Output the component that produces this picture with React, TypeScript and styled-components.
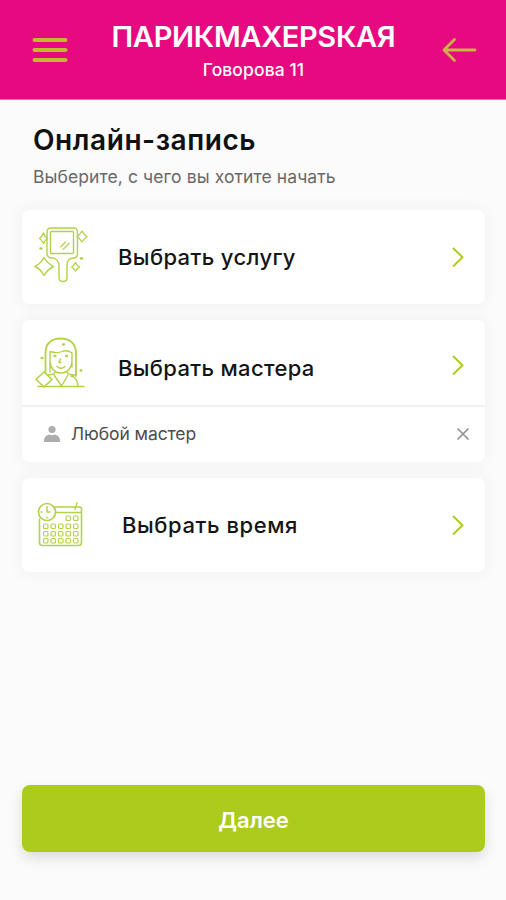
import React from 'react';
import styled, { createGlobalStyle } from 'styled-components';

const LIME = '#adcb1d';

const GlobalStyle = createGlobalStyle`
  * { box-sizing: border-box; }
  body { margin: 0; background: #fbfbfb; font-family: Inter, "Open Sans", sans-serif; }
  button { font-family: inherit; border: 0; padding: 0; background: none; cursor: pointer; }
  svg { display: block; flex: none; }
`;

const Screen = styled.div`
  display: flex;
  flex-direction: column;
  height: 900px;
  overflow: hidden;
`;

const Header = styled.header`
  display: flex;
  justify-content: space-between;
  height: 100px;
  padding: 0 29px 0 32px;
  background: #e6097f;
  border-bottom: 1px solid #ee6eb0;
`;

const HeaderButton = styled.button`
  display: flex;
  height: 100px;
  align-items: center;
`;

const Brand = styled.div`
  display: flex;
  flex-direction: column;
  align-items: center;
  padding: 19px 2px 0 0;
  color: #fff;
  white-space: nowrap;
`;

const BrandName = styled.div`
  font-size: 29px;
  font-weight: 600;
  line-height: 36px;
  letter-spacing: -0.3px;
`;

const Address = styled.div`
  margin-top: 4px;
  font-size: 17.5px;
  font-weight: 500;
  line-height: 22px;
  letter-spacing: 0.1px;
`;

const Main = styled.main`
  display: flex;
  flex: 1;
  flex-direction: column;
  padding: 22px 21px 48px 22px;
`;

const Intro = styled.div`
  height: 88px;
  padding-left: 11px;
  white-space: nowrap;
`;

const Heading = styled.h1`
  margin: 0;
  font-size: 28px;
  font-weight: 600;
  line-height: 36px;
  letter-spacing: 0.57px;
  color: #111;
`;

const Hint = styled.p`
  margin: 8px 0 0;
  font-size: 17.5px;
  line-height: 22px;
  letter-spacing: 0.1px;
  color: #686868;
`;

const Cards = styled.div`
  display: flex;
  flex-direction: column;
  gap: 16px;
`;

const Card = styled.section`
  border-radius: 7px;
  background: #fff;
  box-shadow: 0 0 16px 3px rgba(0, 0, 0, 0.035);
`;

const CardRow = styled.button<{ $height: number; $indent: number; $drop?: number }>`
  display: flex;
  align-items: center;
  width: 100%;
  height: ${({ $height }) => $height}px;
  padding: ${({ $drop = 0 }) => $drop}px 20px 0 10px;
  & > span { margin-left: ${({ $indent }) => $indent}px; }
`;

const RowTitle = styled.span<{ $track: number; $drop: number }>`
  flex: 1;
  padding-top: ${({ $drop }) => $drop}px;
  text-align: left;
  font-size: 22px;
  font-weight: 500;
  line-height: 28px;
  letter-spacing: ${({ $track }) => $track}px;
  color: #151515;
  white-space: nowrap;
`;

const Selected = styled.div`
  display: flex;
  align-items: center;
  height: 57px;
  padding: 0 15px 2px 21px;
  border-top: 2px solid #f0f0f0;
`;

const SelectedName = styled.span`
  flex: 1;
  margin-left: 10px;
  font-size: 17.5px;
  line-height: 24px;
  letter-spacing: -0.08px;
  color: #4c4c4c;
`;

const ClearButton = styled.button`
  display: flex;
`;

const NextButton = styled.button`
  height: 67px;
  margin-top: auto;
  border-radius: 8px;
  background: ${LIME};
  box-shadow: 0 6px 14px rgba(0, 0, 0, 0.13);
  color: #fff;
  font-size: 22px;
  font-weight: 600;
  padding-top: 3px;
`;

const LineIcon = styled.svg<{ $shift?: number }>`
  margin-top: ${({ $shift = 0 }) => $shift}px;
  fill: none;
  stroke: #b2d24a;
  stroke-width: 1.4;
  stroke-linejoin: round;
  stroke-linecap: round;
`;

const MenuIcon = () => (
  <svg width="36" height="36" fill="none" stroke="#c4b832" strokeWidth="4" strokeLinecap="round">
    <path d="M2.500 8H33.500M2.500 18H33.500M2.500 28H33.500" />
  </svg>
);

const BackIcon = () => (
  <svg width="36" height="28" fill="none" stroke="#cfb14a" strokeWidth="2.8" strokeLinecap="round" strokeLinejoin="round">
    <path d="M13.500 3.500 3 14 13.500 24.500M3.500 14H34" />
  </svg>
);

const Chevron = () => (
  <svg width="14" height="22" fill="none" stroke={LIME} strokeWidth="1.9">
    <path d="M2 2 11.500 11.200 2 20.500" />
  </svg>
);

const MirrorIcon = () => (
  <LineIcon width="60" height="60" viewBox="0 0 60 60">
    <rect x="18.500" y="4.500" width="23" height="22" rx="1" />
    <path d="M19 1h22.500q4 0 4 4v21.500q0 4.500-4 4.500c-5 0-6.500 3-6.500 8v11.500q0 4-4 4t-4-4V39c0-5-3-8-7-8q-5 0-5-4.500V5q0-4 4-4z" />
    <path d="m28.500 20 5-5m-2.500 7.500 6-6" strokeWidth="1.1" />
    <path d="M11.500 6q1.500 3.500 4 5.500-2.500 1.500-4 5-1.500-3.500-4-5Q10 9.500 11.500 6zM50 4q2 3.500 5 5.500-3 2-5 5.500-2-3.500-5-5.500Q48 7.500 50 4zM43.500 35.500q1.500 3 4 4.500-2.500 1.500-4 4-1.500-2.500-4-4 2.500-1.500 4-4.500z" />
    <path d="M12 30.500q3.500 6 9.500 9-6 3-9.500 9-3-6-9-9 6-3 9-9z" />
    <path d="M8.500 21.500h1M49 31.500h1" strokeWidth="2.500" />
  </LineIcon>
);

const StylistIcon = () => (
  <LineIcon $shift={4} width="60" height="60" viewBox="0 0 60 60">
    <path d="M13.500 39V16C13.500 6 20 1.500 28.500 1.500S44 6 44 16v23" strokeWidth="1.800" />
    <path d="M18 35V14.500q8 2.500 13-.5 5-1 9 2v14M18 24c0 6 4 12 11 12s11-6 11-12" />
    <path d="M15 38q7 0 8-3m12 0q1 3 8 3M22 38l7.500 11L36 38m3 1q6 1 7 9.500M25 29.500q4 3.500 8 0M28.500 22l-1.500 3.500h2" />
    <path d="M22.500 19h1M34 19h1M31 7.500h1M9.500 21h1M48.500 33.500h1" strokeWidth="2.300" />
    <path d="m12 35 8 7.500-8 7.500-8-7.500z" fill="#fff" strokeWidth="1.700" />
    <path d="M6 49.500H52" strokeWidth="1.600" />
  </LineIcon>
);

const CalendarIcon = () => (
  <LineIcon $shift={7} width="60" height="60" viewBox="0.5 0 60 60">
    <path d="M22 8h26q2 0 2 2v33.500q0 3-3 3H11q-3 0-3-3V20" strokeWidth="1.600" />
    <path d="M24 13.500h25M43.500 10.500l2-6.500" />
    <circle cx="15.500" cy="13" r="8.500" strokeWidth="1.700" />
    <path d="M15.500 7.500V13h3m-9 0h1m5 5v1" />
    {[17, 25, 32.500, 39.500].map((y, row) =>
      [12, 19.500, 27, 34.500, 42].slice(row === 0 ? 3 : 0).map((x) => (
        <rect key={`${x}-${y}`} x={x} y={y} width="4.500" height="4.500" rx="1.300" strokeWidth="1.200" />
      )),
    )}
  </LineIcon>
);

const PersonIcon = () => (
  <svg width="18" height="18" fill="#adadad">
    <circle cx="9" cy="4.500" r="3.600" />
    <path d="M1 17v-2Q1 11 6 9.500q3 1.500 6 0 5 1.500 5 5.500V17z" />
  </svg>
);

const CloseIcon = () => (
  <svg width="14" height="14" fill="none" stroke="#929292" strokeWidth="1.700">
    <path d="m1.500 1.500 11 11m0-11-11 11" />
  </svg>
);

export default function App() {
  return (
    <>
      <GlobalStyle />
      <Screen>
        <Header>
          <HeaderButton aria-label="Меню"><MenuIcon /></HeaderButton>
          <Brand>
            <BrandName>ПАРИКМАХЕРSКАЯ</BrandName>
            <Address>Говорова 11</Address>
          </Brand>
          <HeaderButton aria-label="Назад"><BackIcon /></HeaderButton>
        </Header>
        <Main>
          <Intro>
            <Heading>Онлайн-запись</Heading>
            <Hint>Выберите, с чего вы хотите начать</Hint>
          </Intro>
          <Cards>
            <Card>
              <CardRow $height={94} $indent={26}>
                <MirrorIcon />
                <RowTitle $track={0.37} $drop={0}>Выбрать услугу</RowTitle>
                <Chevron />
              </CardRow>
            </Card>
            <Card>
              <CardRow $height={85} $indent={26} $drop={4}>
                <StylistIcon />
                <RowTitle $track={0.33} $drop={6}>Выбрать мастера</RowTitle>
                <Chevron />
              </CardRow>
              <Selected>
                <PersonIcon />
                <SelectedName>Любой мастер</SelectedName>
                <ClearButton aria-label="Сбросить"><CloseIcon /></ClearButton>
              </Selected>
            </Card>
            <Card>
              <CardRow $height={94} $indent={30}>
                <CalendarIcon />
                <RowTitle $track={0.57} $drop={0}>Выбрать время</RowTitle>
                <Chevron />
              </CardRow>
            </Card>
          </Cards>
          <NextButton>Далее</NextButton>
        </Main>
      </Screen>
    </>
  );
}
